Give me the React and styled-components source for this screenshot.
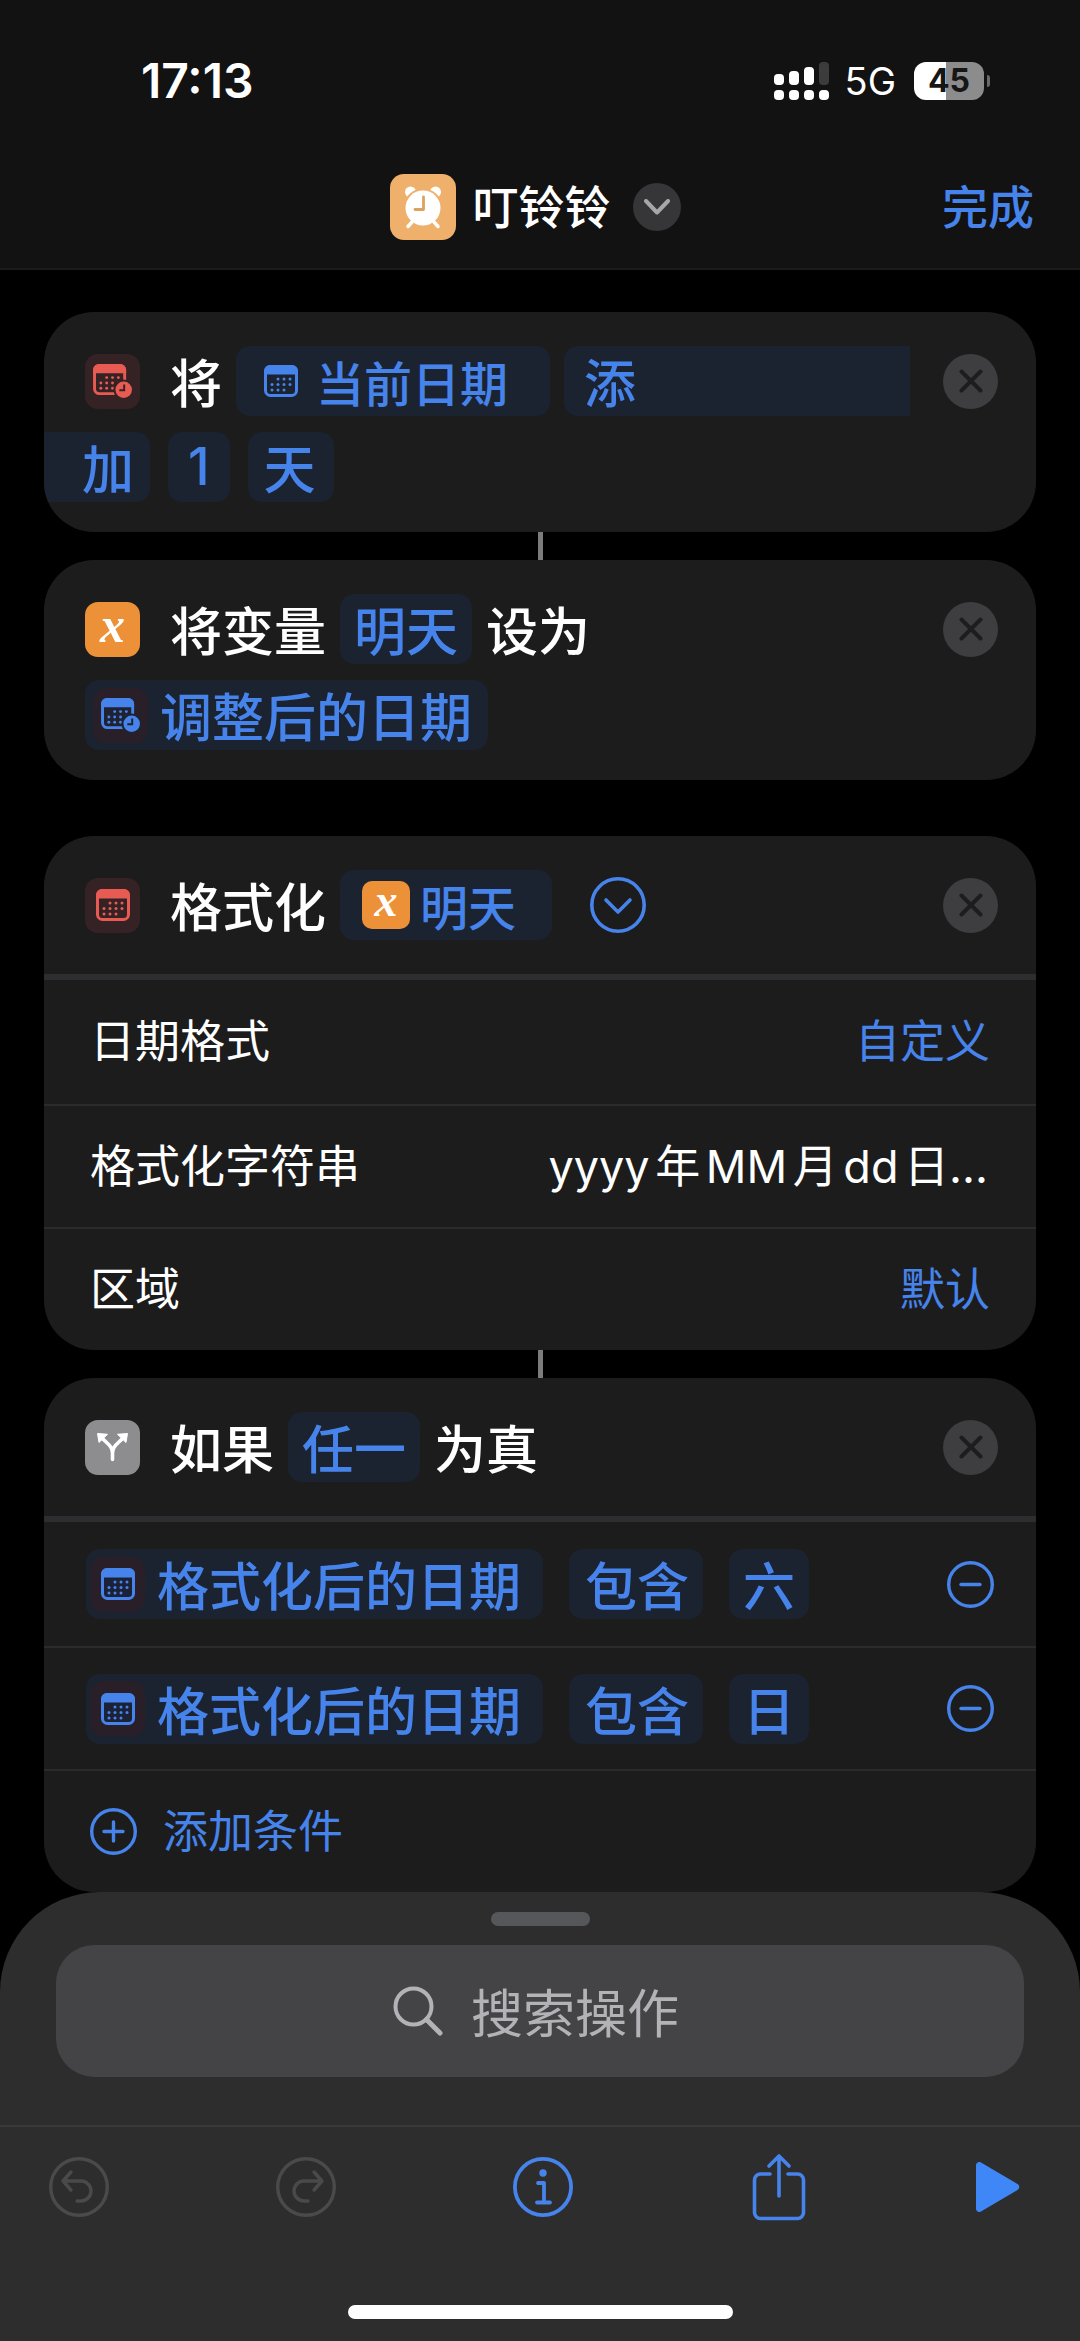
import React from "react";
import styled, { createGlobalStyle } from "styled-components";

const GlobalStyle = createGlobalStyle`
  * {
    box-sizing: border-box;
  }

  body {
    margin: 0;
    background: #000;
    color: #fff;
    font-family: Inter, "Noto Sans CJK SC", sans-serif;
  }

  button,
  input,
  select {
    margin: 0;
    padding: 0;
    border: 0;
    background: none;
    color: inherit;
    font: inherit;
  }

  svg {
    display: block;
    flex: none;
  }
`;

const blue = "#4683ea";
const cjk = `"Noto Sans CJK SC", Inter, sans-serif`;

const Page = styled.div`
  display: flex;
  flex-direction: column;
  min-height: 100vh;
`;

const Header = styled.header`
  background: #121212;
  border-bottom: 2px solid #1b1b1b;
  padding-bottom: 28px;
`;

const StatusBar = styled.div`
  display: flex;
  align-items: center;
  height: 161px;
  padding: 0 90px 0 141px;
`;

const Time = styled.span`
  margin-right: auto;
  font-size: 48px;
  font-weight: 600;
  line-height: 60px;
`;

const Network = styled.span`
  margin: 0 18px 0 16px;
  font-size: 38px;
  font-weight: 400;
`;

const Battery = styled.span`
  width: 70px;
  height: 38px;
  border-radius: 12px;
  background: linear-gradient(90deg, #fff 45%, #8c8c8c 45%);
  color: #161616;
  font-size: 32px;
  font-weight: 700;
  line-height: 38px;
  text-align: center;
`;

const BatteryTip = styled.span`
  width: 3px;
  height: 12px;
  margin-left: 3px;
  border-radius: 0 3px 3px 0;
  background: #6a6a6a;
`;

const TitleBar = styled.div`
  display: grid;
  grid-template-columns: 1fr auto 1fr;
  align-items: center;
  height: 66px;
  margin-top: 13px;
  padding: 0 46px 0 36px;
`;

const TitleGroup = styled.div`
  display: flex;
  grid-column: 2;
  align-items: center;
`;

const AppIcon = styled.span`
  display: grid;
  place-items: center;
  width: 66px;
  height: 66px;
  margin-right: 17px;
  border-radius: 14px;
  background: #eeb06a;
`;

const Title = styled.h1`
  margin: 0 22px 0 0;
  font-size: 46px;
  font-weight: 500;
  line-height: 66px;
`;

const RoundButton = styled.button`
  display: grid;
  place-items: center;
  flex: none;
  width: ${(p) => p.$size}px;
  height: ${(p) => p.$size}px;
  border-radius: 50%;
  background: ${(p) => p.$bg || "none"};
  margin-left: ${(p) => p.$left || "0"};
  color: ${blue};
`;

const Done = styled.button`
  justify-self: end;
  color: ${blue};
  font-size: 46px;
  font-weight: 500;
  line-height: 66px;
`;

const Actions = styled.main`
  padding: 42px 44px 0;
`;

const Card = styled.section`
  overflow: hidden;
  border-radius: 50px;
  background: #1c1c1d;
`;

const Connector = styled.div`
  width: 5px;
  height: 28px;
  margin: 0 auto;
  background: #7c7c7c;
`;

const Gap = styled.div`
  height: 56px;
`;

const CardHead = styled.div`
  display: flex;
  flex-direction: column;
  gap: 16px;
  min-height: 138px;
  padding: 34px 0 30px;
`;

const Line = styled.div`
  display: flex;
  align-items: center;
  gap: ${(p) => p.$gap || 14}px;
  height: 70px;
  padding-right: 38px;
  padding-left: ${(p) => (p.$flush ? 0 : 41)}px;
  font-family: ${cjk};
  font-size: 52px;
  font-weight: 500;
  line-height: 70px;
  white-space: nowrap;
`;

const IconBox = styled.span`
  display: grid;
  place-items: center;
  flex: none;
  width: ${(p) => p.$size || 55}px;
  height: ${(p) => p.$size || 55}px;
  margin-right: ${(p) => p.$gap || 0}px;
  border-radius: ${(p) => (p.$size ? 10 : 13)}px;
  background: ${(p) => p.$bg};
`;

const VariableX = styled.span`
  color: #fff;
  font-family: "Liberation Serif", serif;
  font-size: ${(p) => p.$size}px;
  font-style: italic;
  font-weight: 700;
  line-height: 40px;
  height: 48px;
`;

const Pill = styled.button`
  display: flex;
  align-items: center;
  flex: ${(p) => (p.$fill ? 1 : "none")};
  height: 70px;
  padding: 0 ${(p) => p.$right || 14}px 0 ${(p) => p.$left || 14}px;
  border-radius: ${(p) => p.$radius || "14px"};
  background: #1b2330;
  color: ${blue};
  font-family: ${(p) => (p.$number ? "Inter, sans-serif" : cjk)};
  font-size: ${(p) => (p.$small ? 48 : 52)}px;
  font-weight: 500;
  line-height: 70px;

  svg {
    margin-right: ${(p) => p.$iconGap || 0}px;
  }
`;

const CardBody = styled.div`
  border-top: 6px solid #2e2e30;
`;

const Row = styled.div`
  display: flex;
  align-items: center;
  justify-content: space-between;
  height: 124px;
  padding: 0 46px;
  font-size: 45px;
  line-height: 60px;

  & + & {
    height: 123px;
    border-top: 2px solid #2b2b2d;
  }
`;

const Select = styled.select`
  appearance: none;
  height: 60px;
  color: ${blue};
  font-size: 45px;
  line-height: 60px;
  text-align: right;
  text-align-last: right;
`;

const FormatInput = styled.input`
  flex: 1;
  min-width: 0;
  height: 60px;
  padding-right: 2px;
  font-size: 45px;
  text-align: right;
  text-autospace: normal;
`;

const Condition = styled(Row)`
  justify-content: flex-start;
  gap: 26px;
  padding: 0 42px;
`;

const AddCondition = styled.button`
  display: flex;
  align-items: center;
  gap: 26px;
  color: ${blue};
`;

const Sheet = styled.footer`
  display: flex;
  flex-direction: column;
  align-items: center;
  margin-top: auto;
  padding: 20px 0 22px;
  border-radius: 100px 100px 0 0;
  background: #2d2d2e;
`;

const Grabber = styled.div`
  width: 99px;
  height: 14px;
  margin-bottom: 19px;
  border-radius: 7px;
  background: #55575b;
`;

const SearchBox = styled.label`
  display: flex;
  align-items: center;
  justify-content: center;
  gap: 28px;
  align-self: stretch;
  height: 132px;
  margin: 0 56px 48px;
  padding-right: 4px;
  border-radius: 38px;
  background: #444447;
`;

const SearchInput = styled.input`
  width: 212px;
  outline: none;
  font-family: ${cjk};
  font-size: 52px;
  line-height: 70px;

  &::placeholder {
    color: #b3b3b7;
    opacity: 1;
  }
`;

const Toolbar = styled.nav`
  display: grid;
  grid-template-columns: 23fr 24fr 24fr 23fr 44px;
  align-items: center;
  align-self: stretch;
  height: 122px;
  margin-bottom: 58px;
  padding: 0 60px 0 49px;
  border-top: 2px solid #3a3a3b;
`;

const ToolButton = styled.button`
  display: flex;
  align-items: center;
  width: min-content;
  color: ${(p) => (p.$off ? "#4a4a4b" : blue)};
`;

const HomeBar = styled.div`
  width: 385px;
  height: 14px;
  border-radius: 7px;
  background: #fff;
`;

const SignalIcon = () => (
  <svg width="55" height="38" viewBox="0 0 55 38" fill="#fff">
    <rect x="0" y="12" width="10" height="11" rx="4" />
    <rect x="15" y="9" width="10" height="14" rx="4" />
    <rect x="30" y="5" width="10" height="18" rx="4" />
    <rect x="45" y="0" width="10" height="23" rx="4" fill="#3c3c3c" />
    {[0, 15, 30, 45].map((x) => (
      <rect key={x} x={x} y="28" width="10" height="10" rx="4" />
    ))}
  </svg>
);

const AlarmIcon = () => (
  <svg width="40" height="44" viewBox="0 0 40 44">
    <circle cx="7.500" cy="7" r="5.500" fill="#fff" />
    <circle cx="32.500" cy="7" r="5.500" fill="#fff" />
    <circle cx="20" cy="23" r="19.500" fill="#eeb06a" />
    <circle cx="20" cy="23" r="17.500" fill="#fff" />
    <path
      d="M20.500 12v12.500H12"
      fill="none"
      stroke="#dca35f"
      strokeWidth="2.800"
      strokeLinecap="round"
      strokeLinejoin="round"
    />
    <path d="M9 37l-4 4.500M31 37l4 4.500" stroke="#fff" strokeWidth="3.500" strokeLinecap="round" />
  </svg>
);

const dots = [
  [14, 14], [20, 14], [26, 14],
  [8, 19.5], [14, 19.5], [20, 19.5], [26, 19.5],
  [8, 25], [14, 25], [20, 25],
];

const CalendarIcon = ({ color = blue, hole = "#1b2330", clock }) => (
  <svg
    width={clock ? 40 : 34}
    height={clock ? 35 : 32}
    viewBox={clock ? "0 0 41 36" : "0 0 34 32"}
  >
    <rect x="1.500" y="1.500" width="31" height="29" rx="5" fill={hole} stroke={color} strokeWidth="3" />
    <path d="M0 9.500V6a6 6 0 0 1 6-6h22a6 6 0 0 1 6 6v3.500z" fill={color} />
    {dots.map(([x, y]) => (
      <circle key={`${x}-${y}`} cx={x} cy={y} r="1.500" fill={color} />
    ))}
    {clock && (
      <>
        <circle cx="31.500" cy="26.500" r="10.500" fill={hole} />
        <circle cx="31.500" cy="26.500" r="8.500" fill={color} />
        <path d="M32 21v6h-5" fill="none" stroke={hole} strokeWidth="2" />
      </>
    )}
  </svg>
);

const BranchIcon = () => (
  <svg width="55" height="55" viewBox="0 0 55 55" fill="#fff">
    <path
      d="M27.500 39.500V33c0-7-5-9-11-15.500M27.500 33c0-7 5-9 11-15.500"
      fill="none"
      stroke="#fff"
      strokeWidth="3.600"
      strokeLinecap="round"
    />
    <path d="M12.500 13.500l10 .8-8.500 8.200z" stroke="#fff" strokeLinejoin="round" />
    <path d="M42.500 13.500l-10 .8 8.500 8.200z" stroke="#fff" strokeLinejoin="round" />
  </svg>
);

const XIcon = () => (
  <svg width="24" height="24" viewBox="0 0 24 24" stroke="#1d1d1e" strokeWidth="4" strokeLinecap="round">
    <path d="M2.500 2.500l19 19M21.500 2.500l-19 19" />
  </svg>
);

const ChevronIcon = ({ color = "#a6a6ab", width = 4 }) => (
  <svg width="26" height="16" viewBox="0 0 26 16" fill="none" stroke={color} strokeWidth={width} strokeLinecap="round" strokeLinejoin="round">
    <path d="M2 2l11 11.500L24 2" />
  </svg>
);

const CircleIcon = ({ size = 47, stroke = 3.4, children }) => (
  <svg
    width={size}
    height={size}
    viewBox={`0 0 ${size} ${size}`}
    fill="none"
    stroke="currentColor"
    strokeWidth={stroke}
    strokeLinecap="round"
    strokeLinejoin="round"
  >
    <circle cx={size / 2} cy={size / 2} r={(size - stroke) / 2} />
    {children}
  </svg>
);

const SearchIcon = () => (
  <svg width="50" height="50" viewBox="0 0 50 50" fill="none" stroke="#b3b3b7" strokeWidth="4" strokeLinecap="round">
    <circle cx="20.500" cy="20.500" r="18" />
    <path d="M33.500 33.500L47 47" strokeWidth="5" />
  </svg>
);

const ShareIcon = () => (
  <svg width="60" height="68" viewBox="0 0 60 68" fill="none" stroke="currentColor" strokeWidth="3.600" strokeLinecap="round" strokeLinejoin="round">
    <path d="M21 21h-9.500a6 6 0 0 0-6 6v32.500a6 6 0 0 0 6 6h37a6 6 0 0 0 6-6V27a6 6 0 0 0-6-6H39" />
    <path d="M30 43V3M20 13L30 3l10 10" />
  </svg>
);

const PlayIcon = () => (
  <svg width="44" height="50" viewBox="0 0 44 50" fill="#3f87f7">
    <path d="M0 3.500C0 .8 2.700-.8 5 .6l36.500 21.500c2.300 1.400 2.300 4.400 0 5.800L5 49.400c-2.300 1.400-5-.2-5-2.900z" />
  </svg>
);

const CloseButton = ({ left = "auto" }) => (
  <RoundButton $size={55} $bg="#3e3e40" $left={left} aria-label="删除">
    <XIcon />
  </RoundButton>
);

const conditions = ["六", "日"];

const App = () => {
  return (
    <Page>
      <GlobalStyle />
      <Header>
        <StatusBar>
          <Time>17:13</Time>
          <SignalIcon />
          <Network>5G</Network>
          <Battery>45</Battery>
          <BatteryTip />
        </StatusBar>
        <TitleBar>
          <TitleGroup>
            <AppIcon>
              <AlarmIcon />
            </AppIcon>
            <Title>叮铃铃</Title>
            <RoundButton $size={48} $bg="#363638" aria-label="更多">
              <ChevronIcon />
            </RoundButton>
          </TitleGroup>
          <Done>完成</Done>
        </TitleBar>
      </Header>

      <Actions>
        <Card>
          <CardHead>
            <Line>
              <IconBox $bg="#352224" $gap={16}>
                <CalendarIcon color="#e85b52" hole="#352224" clock />
              </IconBox>
              <span>将</span>
              <Pill $small $left={28} $right={42} $iconGap={18}>
                <CalendarIcon />
                当前日期
              </Pill>
              <Pill $fill $left={20} $radius="14px 0 0 14px">
                添
              </Pill>
              <CloseButton left="19px" />
            </Line>
            <Line $flush $gap={18}>
              <Pill $left={38} $right={16} $radius="0 14px 14px 0">
                加
              </Pill>
              <Pill $number $left={20} $right={20}>1</Pill>
              <Pill $left={16} $right={18}>天</Pill>
            </Line>
          </CardHead>
        </Card>
        <Connector />

        <Card>
          <CardHead>
            <Line>
              <IconBox $bg="#ed9138" $gap={16}>
                <VariableX $size={50}>x</VariableX>
              </IconBox>
              <span>将变量</span>
              <Pill>明天</Pill>
              <span>设为</span>
              <CloseButton />
            </Line>
            <Line>
              <Pill $left={8} $right={16}>
                <IconBox $bg="#281f28" $gap={12}>
                  <CalendarIcon hole="#1f2230" clock />
                </IconBox>
                调整后的日期
              </Pill>
            </Line>
          </CardHead>
        </Card>
        <Gap />

        <Card>
          <CardHead>
            <Line>
              <IconBox $bg="#352224" $gap={16}>
                <CalendarIcon color="#e85b52" hole="#352224" />
              </IconBox>
              <span>格式化</span>
              <Pill $small $left={22} $right={36}>
                <IconBox $bg="#ed9138" $size={48} $gap={10}>
                  <VariableX $size={46}>x</VariableX>
                </IconBox>
                明天
              </Pill>
              <RoundButton $size={56} $left="24px" aria-label="收起">
                <CircleIcon size={56} stroke={3.6}>
                  <path d="M16 23l12 12 12-12" />
                </CircleIcon>
              </RoundButton>
              <CloseButton />
            </Line>
          </CardHead>
          <CardBody>
            <Row>
              <label htmlFor="date-format">日期格式</label>
              <Select id="date-format">
                <option>自定义</option>
              </Select>
            </Row>
            <Row>
              <label htmlFor="format-string">格式化字符串</label>
              <FormatInput id="format-string" defaultValue="yyyy年MM月dd日..." />
            </Row>
            <Row>
              <label htmlFor="locale">区域</label>
              <Select id="locale">
                <option>默认</option>
              </Select>
            </Row>
          </CardBody>
        </Card>
        <Connector />

        <Card>
          <CardHead>
            <Line>
              <IconBox $bg="#8d8d8f" $gap={16}>
                <BranchIcon />
              </IconBox>
              <span>如果</span>
              <Pill>任一</Pill>
              <span>为真</span>
              <CloseButton />
            </Line>
          </CardHead>
          <CardBody>
            {conditions.map((day) => (
              <Condition key={day}>
                <Pill $left={4} $right={22}>
                  <IconBox $bg="#281f28" $gap={12}>
                    <CalendarIcon hole="#1b2238" />
                  </IconBox>
                  格式化后的日期
                </Pill>
                <Pill $left={16}>包含</Pill>
                <Pill>{day}</Pill>
                <RoundButton $size={47} $left="auto" aria-label="移除条件">
                  <CircleIcon>
                    <path d="M14 23.500h19" />
                  </CircleIcon>
                </RoundButton>
              </Condition>
            ))}
            <Row>
              <AddCondition>
                <CircleIcon>
                  <path d="M14 23.500h19M23.500 14v19" />
                </CircleIcon>
                添加条件
              </AddCondition>
            </Row>
          </CardBody>
        </Card>
      </Actions>

      <Sheet>
        <Grabber />
        <SearchBox>
          <SearchIcon />
          <SearchInput type="text" placeholder="搜索操作" aria-label="搜索操作" />
        </SearchBox>
        <Toolbar>
          <ToolButton $off aria-label="撤销">
            <CircleIcon size={60}>
              <path d="M22 15l-8 9 8 9M14 24h18a10 10 0 0 1 0 20h-4" />
            </CircleIcon>
          </ToolButton>
          <ToolButton $off aria-label="重做">
            <CircleIcon size={60}>
              <path d="M38 15l8 9-8 9M46 24H28a10 10 0 0 0 0 20h4" />
            </CircleIcon>
          </ToolButton>
          <ToolButton aria-label="信息">
            <CircleIcon size={60} stroke={3.8}>
              <circle cx="30" cy="16" r="1.800" fill="currentColor" />
              <path d="M25 26h6v19M24 45.500h13" />
            </CircleIcon>
          </ToolButton>
          <ToolButton aria-label="共享">
            <ShareIcon />
          </ToolButton>
          <ToolButton aria-label="运行">
            <PlayIcon />
          </ToolButton>
        </Toolbar>
        <HomeBar />
      </Sheet>
    </Page>
  );
};

export default App;
